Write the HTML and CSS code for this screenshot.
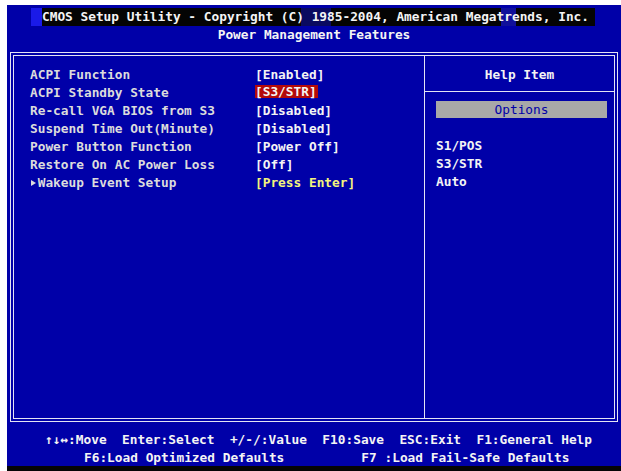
FILE: index.html
```html
<!DOCTYPE html>
<html>
<head>
<meta charset="utf-8">
<link rel="stylesheet" href="styles.css">
</head>
<body>
<div class="screen">
  <div class="title">
    <div class="title-line"><span class="title-band">CMOS Setup Utility - Copyright (C) 1985-2004, American Megatrends, Inc.</span></div>
    <div class="title-line">Power Management Features</div>
  </div>
  <div class="frame">
    <div class="main">
      <div class="items">
        <div class="label">ACPI Function</div><div class="value">[Enabled]</div>
        <div class="label">ACPI Standby State</div><div class="value"><span class="sel">[S3/STR]</span></div>
        <div class="label">Re-call VGA BIOS from S3</div><div class="value">[Disabled]</div>
        <div class="label">Suspend Time Out(Minute)</div><div class="value">[Disabled]</div>
        <div class="label">Power Button Function</div><div class="value">[Power Off]</div>
        <div class="label">Restore On AC Power Loss</div><div class="value">[Off]</div>
        <div class="label"><span class="arrow"></span>Wakeup Event Setup</div><div class="value enter">[Press Enter]</div>
      </div>
    </div>
    <div class="help">
      <div class="help-head">Help Item</div>
      <div class="help-body">
        <div class="options">Options</div>
        <div class="opt-list">
          <div>S1/POS</div>
          <div>S3/STR</div>
          <div>Auto</div>
        </div>
      </div>
    </div>
  </div>
  <div class="footer">
    <div class="foot-line one">↑↓↔:Move  Enter:Select  +/-/:Value  F10:Save  ESC:Exit  F1:General Help</div>
    <div class="foot-line two">F6:Load Optimized Defaults          F7 :Load Fail-Safe Defaults</div>
  </div>
</div>
</body>
</html>
```

FILE: styles.css
```css
html, body {
  margin: 0;
  padding: 0;
  background: #ffffff;
}

body {
  width: 621px;
  height: 471px;
  overflow: hidden;
}

.screen {
  margin: 5px 0 0 7px;
  width: 614px;
  height: 461px;
  background: #0000a8;
  border-bottom: 5px solid #050505;
  display: flex;
  flex-direction: column;
  font-family: "DejaVu Sans Mono", "Liberation Mono", monospace;
  font-weight: bold;
  font-size: 12.8px;
  color: #f4f4f4;
}

.title {
  padding-top: 3px;
  height: 44px;
  flex: none;
}

.title-line {
  height: 18px;
  line-height: 18px;
  text-align: center;
  white-space: pre;
}

.title-band {
  display: inline-block;
  padding: 0 6px 0 11px;
  margin-left: -2px;
  background: linear-gradient(90deg,
    #1a1ae8 0px, #1a1ae8 11px,
    #040404 11px, #040404 270px,
    #0a0a60 270px, #0a0a60 300px,
    #040404 300px, #040404 470px,
    #10109a 470px, #10109a 485px,
    #040404 485px);
}

.frame {
  flex: none;
  margin: 0 3px;
  height: 362px;
  border: 4px double #e4e4f4;
  display: flex;
}

.main {
  width: 411px;
  border-right: 1px solid #e4e4f4;
  padding: 10px 0 0 16px;
  box-sizing: border-box;
}

.items {
  display: grid;
  grid-template-columns: 225px auto;
  grid-auto-rows: 18px;
  line-height: 18px;
}

.label {
  color: #dcdcdc;
  white-space: pre;
  display: flex;
  align-items: center;
}

.value {
  color: #f4f4f4;
  white-space: pre;
}

.value.enter {
  color: #f4f47c;
}

.sel {
  display: inline-block;
  background: #b40a0a;
  line-height: 13px;
  padding: 0 1px 0 0;
  vertical-align: 1px;
}

.arrow {
  display: inline-block;
  width: 7.7px;
  height: 8px;
  position: relative;
}

.arrow::before {
  content: "";
  position: absolute;
  left: 1px;
  top: 1px;
  border-left: 5px solid #dcdcdc;
  border-top: 3px solid transparent;
  border-bottom: 3px solid transparent;
}

.help {
  flex: 1;
  display: flex;
  flex-direction: column;
}

.help-head {
  height: 36px;
  padding-top: 10px;
  box-sizing: border-box;
  line-height: 18px;
  text-align: center;
  border-bottom: 1px solid #e4e4f4;
}

.help-body {
  padding: 9px 7px 0 11px;
}

.options {
  background: #a8a8a8;
  color: #0000a8;
  text-align: center;
  height: 17px;
  line-height: 17px;
  font-weight: normal;
}

.opt-list {
  margin-top: 19px;
  line-height: 18px;
}

.footer {
  flex: 1;
  padding-top: 9px;
}

.foot-line {
  height: 18px;
  line-height: 18px;
  white-space: pre;
}

.foot-line.one {
  padding-left: 38px;
}

.foot-line.two {
  padding-left: 77px;
}
```
